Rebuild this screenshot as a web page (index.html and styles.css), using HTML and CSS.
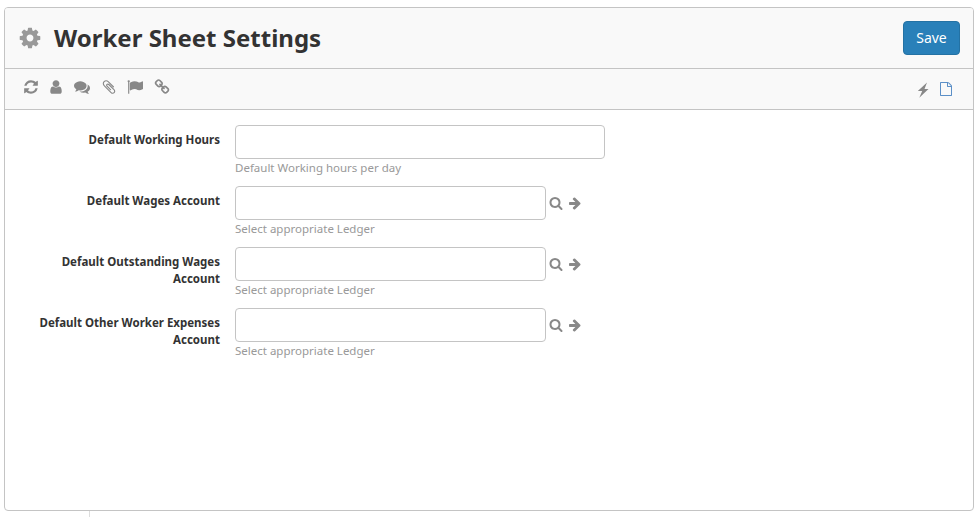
FILE: index.html
```html
<!DOCTYPE html>
<html lang="en">
<head>
<meta charset="utf-8">
<title>Worker Sheet Settings</title>
<link rel="stylesheet" href="styles.css">
</head>
<body>
<svg class="defs" viewBox="0 0 1792 1792">
<symbol id="cog" viewBox="0 0 1792 1792"><path d="M1152 896q0-106-75-181t-181-75-181 75-75 181 75 181 181 75 181-75 75-181zm512-109v222q0 12-8 23t-20 13l-185 28q-19 54-39 91 35 50 107 138 10 12 10 25t-9 23q-27 37-99 108t-94 71q-12 0-26-9l-138-108q-44 23-91 38-16 136-29 186-7 28-36 28h-222q-14 0-24.5-8.5t-11.5-21.5l-28-184q-49-16-90-37l-141 107q-10 9-25 9-14 0-25-11-126-114-165-168-7-10-7-23 0-12 8-23 15-21 51-66.5t54-70.5q-27-50-41-99l-183-27q-13-2-21-12.5t-8-23.5v-222q0-12 8-23t19-13l186-28q14-46 39-92-40-57-107-138-10-12-10-24 0-10 9-23 26-36 98.5-107.5t94.5-71.5q13 0 26 10l138 107q44-23 91-38 16-136 29-186 7-28 36-28h222q14 0 24.5 8.5t11.5 21.5l28 184q49 16 90 37l142-107q9-9 24-9 13 0 25 10 129 119 165 170 7 8 7 22 0 12-8 23-15 21-51 66.5t-54 70.5q26 50 41 98l183 28q13 2 21 12.5t8 23.5z"/></symbol>
<symbol id="refresh" viewBox="0 0 1792 1792"><path d="M1639 1056q0 5-1 7-64 268-268 434.5t-478 166.5q-146 0-282.5-55t-243.5-157l-129 129q-19 19-45 19t-45-19-19-45v-448q0-26 19-45t45-19h448q26 0 45 19t19 45-19 45l-137 137q71 66 161 102t187 36q134 0 250-65t186-179q11-17 53-117 8-23 30-23h192q13 0 22.5 9.5t9.5 22.5zm25-800v448q0 26-19 45t-45 19h-448q-26 0-45-19t-19-45 19-45l138-138q-148-137-349-137-134 0-250 65t-186 179q-11 17-53 117-8 23-30 23h-199q-13 0-22.5-9.5t-9.5-22.5v-7q65-268 270-434.5t480-166.5q146 0 284 55.5t245 156.5l130-129q19-19 45-19t45 19 19 45z"/></symbol>
<symbol id="user" viewBox="0 0 1792 1792"><path d="M1536 1399q0 109-62.5 187t-150.5 78h-854q-88 0-150.5-78t-62.5-187q0-85 8.5-160.5t31.5-152 58.5-131 94-89 134.5-34.5q131 128 313 128t313-128q76 0 134.5 34.5t94 89 58.5 131 31.5 152 8.5 160.5zm-256-887q0 159-112.5 271.5t-271.5 112.5-271.5-112.5-112.5-271.5 112.5-271.5 271.5-112.5 271.5 112.5 112.5 271.5z"/></symbol>
<symbol id="comments" viewBox="0 0 1792 1792"><path d="M1408 768q0 139-94 257t-256.5 186.5-353.5 68.5q-86 0-176-16-124 88-278 128-36 9-86 16h-3q-11 0-20.5-8t-11.5-21q-1-3-1-6.5t.5-6.5 2-6l2.5-5 3.5-5.5 4-5 4.5-5 4-4.5q5-6 23-25t26-29.5 22.5-29 25-38.5 20.5-44q-124-72-195-177t-71-224q0-139 94-257t256.5-186.5 353.5-68.5 353.5 68.5 256.5 186.5 94 257zm384 256q0 120-71 224.5t-195 176.5q10 24 20.5 44t25 38.5 22.5 29 26 29.5 23 25q1 1 4 4.5t4.5 5 4 5 3.5 5.5l2.5 5 2 6 .5 6.5-1 6.5q-3 14-13 22t-22 7q-50-7-86-16-154-40-278-128-90 16-176 16-271 0-472-132 58 4 88 4 161 0 309-45t264-129q125-92 192-212t67-254q0-77-23-152 129 71 204 178t75 230z"/></symbol>
<symbol id="clip" viewBox="0 0 1792 1792"><path d="M1596 1385q0 117-79 196t-196 79q-135 0-235-100l-777-776q-113-115-113-271 0-159 110-270t269-111q158 0 273 113l605 606q10 10 10 22 0 16-30.5 46.5t-46.5 30.5q-13 0-23-10l-606-607q-79-77-181-77-106 0-179 75t-73 181q0 105 76 181l776 777q63 63 145 63 64 0 106-42t42-106q0-82-63-145l-581-581q-26-24-60-24-29 0-48 19t-19 48q0 32 25 59l410 410q10 10 10 22 0 16-31 47t-47 31q-12 0-22-10l-410-410q-63-61-63-149 0-82 57-139t139-57q88 0 149 63l581 581q100 98 100 235z"/></symbol>
<symbol id="flag" viewBox="0 0 1792 1792"><path d="M320 256q0 72-64 110v1266q0 13-9.5 22.5t-22.5 9.5h-64q-13 0-22.5-9.5t-9.5-22.5v-1266q-64-38-64-110 0-53 37.5-90.5t90.5-37.5 90.5 37.5 37.5 90.5zm1472 64v763q0 25-12.5 38.5t-39.5 27.5q-215 116-369 116-61 0-123.5-22t-108.5-48-115.5-48-142.5-22q-192 0-464 146-17 9-33 9-26 0-45-19t-19-45v-742q0-32 31-55 21-14 79-43 236-120 421-120 107 0 200 29t219 88q38 19 88 19 54 0 117.5-21t110-47 88-47 54.5-21q26 0 45 19t19 45z"/></symbol>
<symbol id="link" viewBox="0 0 1792 1792"><path d="M1520 1216q0-40-28-68l-208-208q-28-28-68-28-42 0-72 32 3 3 19 18.5t21.5 21.5 15 19 13 25.5 3.5 27.5q0 40-28 68t-68 28q-15 0-27.5-3.5t-25.5-13-19-15-21.5-21.5-18.5-19q-33 31-33 73 0 40 28 68l206 207q27 27 68 27 40 0 68-26l147-146q28-28 28-67zm-703-705q0-40-28-68l-206-207q-28-28-68-28-39 0-68 27l-147 146q-28 28-28 67 0 40 28 68l208 208q27 27 68 27 42 0 72-31-3-3-19-18.5t-21.5-21.5-15-19-13-25.5-3.5-27.5q0-40 28-68t68-28q15 0 27.5 3.5t25.5 13 19 15 21.5 21.5 18.5 19q33-31 33-73zm895 705q0 120-85 203l-147 146q-83 83-203 83-121 0-204-85l-206-207q-83-83-83-203 0-123 88-209l-88-88q-86 88-208 88-120 0-204-84l-208-208q-84-84-84-204t85-203l147-146q83-83 203-83 121 0 204 85l206 207q83 83 83 203 0 123-88 209l88 88q86-88 208-88 120 0 204 84l208 208q84 84 84 204z"/></symbol>
<symbol id="search" viewBox="0 0 1792 1792"><path d="M1216 832q0-185-131.5-316.5t-316.5-131.5-316.5 131.5-131.5 316.5 131.5 316.5 316.5 131.5 316.5-131.5 131.5-316.5zm512 832q0 52-38 90t-90 38q-54 0-90-38l-343-342q-179 124-399 124-143 0-273.5-55.5t-225-150-150-225-55.5-273.5 55.5-273.5 150-225 225-150 273.5-55.5 273.5 55.5 225 150 150 225 55.5 273.5q0 220-124 399l343 343q37 37 37 90z"/></symbol>
<symbol id="arrow" viewBox="0 0 1792 1792"><path d="M1600 960q0 54-37 91l-651 651q-39 37-91 37-51 0-90-37l-75-75q-38-38-38-91t38-91l293-293h-704q-52 0-84.5-37.5t-32.5-90.5v-128q0-53 32.5-90.5t84.5-37.5h704l-293-294q-38-36-38-90t38-90l75-75q38-38 90-38 53 0 91 38l651 651q37 35 37 90z"/></symbol>
<symbol id="bolt" viewBox="0 0 16 16"><path d="M13.5 7h-4l2.5-6.6L2.8 9h4.4l-2.9 6.7z"/></symbol>
<symbol id="file" viewBox="0 0 1792 1792"><path d="M1596 380q28 28 48 76t20 88v1152q0 40-28 68t-68 28h-1344q-40 0-68-28t-28-68v-1600q0-40 28-68t68-28h896q40 0 88 20t76 48zm-444-244v376h376q-10-29-22-41l-313-313q-12-12-41-22zm384 1528v-1024h-416q-40 0-68-28t-28-68v-416h-768v1536h1280z"/></symbol>
</svg>
<main class="panel">
  <header class="header">
    <svg class="icon cog"><use href="#cog"/></svg>
    <h1>Worker Sheet Settings</h1>
    <button class="save">Save</button>
  </header>
  <nav class="toolbar">
    <div class="tools">
      <svg class="icon"><use href="#refresh"/></svg>
      <svg class="icon user"><use href="#user"/></svg>
      <svg class="icon"><use href="#comments"/></svg>
      <svg class="icon clip"><use href="#clip"/></svg>
      <svg class="icon"><use href="#flag"/></svg>
      <svg class="icon link"><use href="#link"/></svg>
    </div>
    <div class="actions">
      <svg class="icon"><use href="#bolt"/></svg>
      <svg class="icon file"><use href="#file"/></svg>
    </div>
  </nav>
  <form class="form">
    <div class="row">
      <label for="hours">Default Working Hours</label>
      <div class="field"><input id="hours" class="wide"><p>Default Working hours per day</p></div>
    </div>
    <div class="row">
      <label for="wages">Default Wages Account</label>
      <div class="field"><div class="lookup"><input id="wages"><svg class="icon"><use href="#search"/></svg><svg class="icon arrow"><use href="#arrow"/></svg></div><p>Select appropriate Ledger</p></div>
    </div>
    <div class="row">
      <label for="outstanding">Default Outstanding Wages Account</label>
      <div class="field"><div class="lookup"><input id="outstanding"><svg class="icon"><use href="#search"/></svg><svg class="icon arrow"><use href="#arrow"/></svg></div><p>Select appropriate Ledger</p></div>
    </div>
    <div class="row">
      <label for="expenses">Default Other Worker Expenses Account</label>
      <div class="field"><div class="lookup"><input id="expenses"><svg class="icon"><use href="#search"/></svg><svg class="icon arrow"><use href="#arrow"/></svg></div><p>Select appropriate Ledger</p></div>
    </div>
  </form>
</main>
<div class="divider"></div>
</body>
</html>
```
FILE: styles.css
```css
* { box-sizing: border-box; }
body {
  margin: 0;
  padding: 7px 5px 0 4px;
  height: 517px;
  overflow: hidden;
  background: #fff;
  color: #333;
  font-family: "Noto Sans", sans-serif;
}
.defs { display: none; }
.icon { display: block; flex: none; width: 16px; height: 16px; fill: #888; }
.panel {
  height: 504px;
  border: 1px solid #c4c4c4;
  border-radius: 4px;
  overflow: hidden;
}
.header {
  display: flex;
  align-items: center;
  height: 61px;
  padding: 0 13px 0 13px;
  background: #f9f9f9;
  border-bottom: 1px solid #c4c4c4;
}
.cog { width: 24px; height: 24px; fill: #999; }
h1 { margin: 0 auto 0 12px; font-size: 24px; line-height: 32px; font-weight: 700; }
.save {
  width: 57px;
  height: 34px;
  padding: 0;
  border: 1px solid #2472a4;
  border-radius: 4px;
  background: #2980b9;
  color: #fff;
  font: 14px/20px "Noto Sans", sans-serif;
}
.toolbar {
  display: flex;
  justify-content: space-between;
  height: 41px;
  padding: 10px 20px 0 18px;
  background: #f9f9f9;
  border-bottom: 1px solid #c4c4c4;
}
.tools { display: flex; gap: 10px; }
.tools .user { margin-left: -1px; }
.tools .clip { margin-left: 1px; }
.tools .link { margin-left: 1px; }
.actions { display: flex; gap: 8px; padding-top: 3px; }
.file { width: 14px; height: 14px; fill: #5b8fc7; }
.form { padding-top: 15px; }
.row { display: flex; height: 61px; }
label {
  width: 230px;
  padding: 6px 15px 0 30px;
  text-align: right;
  font-size: 11.5px;
  line-height: 17px;
  font-weight: 700;
}
input {
  display: block;
  width: 311px;
  height: 34px;
  border: 1px solid #c4c4c4;
  border-radius: 4px;
  background: #fff;
}
input.wide { width: 370px; }
.lookup { display: flex; align-items: center; }
.lookup .icon { width: 14px; height: 14px; margin-left: 3px; }
.lookup .arrow { margin-left: 5px; }
p { margin: 1px 0 0; color: #999; font-size: 11.5px; line-height: 16px; }
.divider { width: 1px; height: 6px; margin-left: 85px; background: #ddd; }
```
